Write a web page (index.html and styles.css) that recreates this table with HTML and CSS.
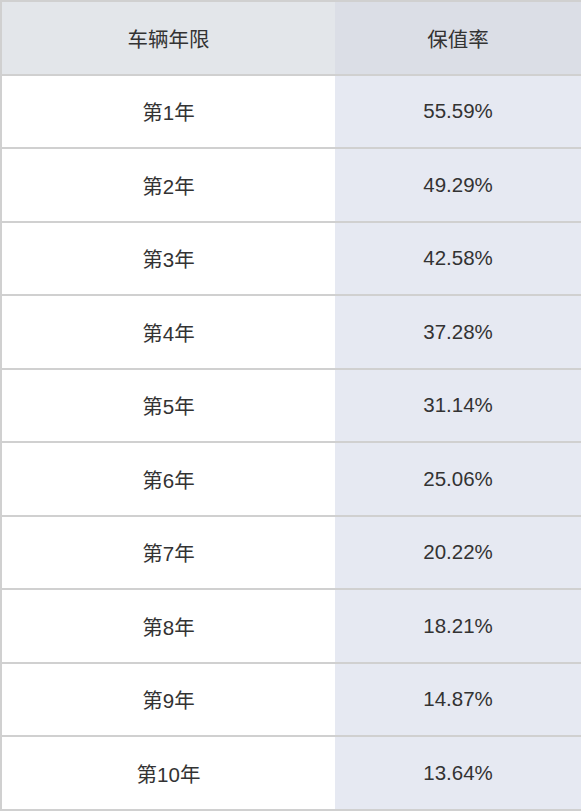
FILE: index.html
```html
<!DOCTYPE html>
<html lang="zh-CN">
<head>
<meta charset="utf-8">
<title>车辆保值率</title>
<link rel="stylesheet" href="styles.css">
</head>
<body>
<div class="table">
  <div class="cell head left">车辆年限</div><div class="cell head right">保值率</div>
  <div class="cell left">第1年</div><div class="cell right">55.59%</div>
  <div class="cell left">第2年</div><div class="cell right">49.29%</div>
  <div class="cell left">第3年</div><div class="cell right">42.58%</div>
  <div class="cell left">第4年</div><div class="cell right">37.28%</div>
  <div class="cell left">第5年</div><div class="cell right">31.14%</div>
  <div class="cell left">第6年</div><div class="cell right">25.06%</div>
  <div class="cell left">第7年</div><div class="cell right">20.22%</div>
  <div class="cell left">第8年</div><div class="cell right">18.21%</div>
  <div class="cell left">第9年</div><div class="cell right">14.87%</div>
  <div class="cell left">第10年</div><div class="cell right">13.64%</div>
</div>
</body>
</html>
```
FILE: styles.css
```css
html, body {
  margin: 0;
  padding: 0;
  background: #ffffff;
  overflow: hidden;
}
.table {
  display: grid;
  grid-template-columns: 333px 246px;
  grid-auto-rows: 73.5px;
  border-top: 2px solid #d0d0d0;
  border-left: 2px solid #d0d0d0;
  width: 579px;
  font-family: "Liberation Sans", "Noto Sans CJK SC", sans-serif;
  font-size: 20.5px;
  color: #333333;
}
.cell {
  display: flex;
  align-items: center;
  justify-content: center;
  border-bottom: 2px solid #d0d0d0;
  box-sizing: border-box;
}
.left {
  background: #ffffff;
}
.right {
  background: #e6e9f2;
}
.head.left {
  background: #e3e6ea;
}
.head.right {
  background: #dbdee6;
}
```
